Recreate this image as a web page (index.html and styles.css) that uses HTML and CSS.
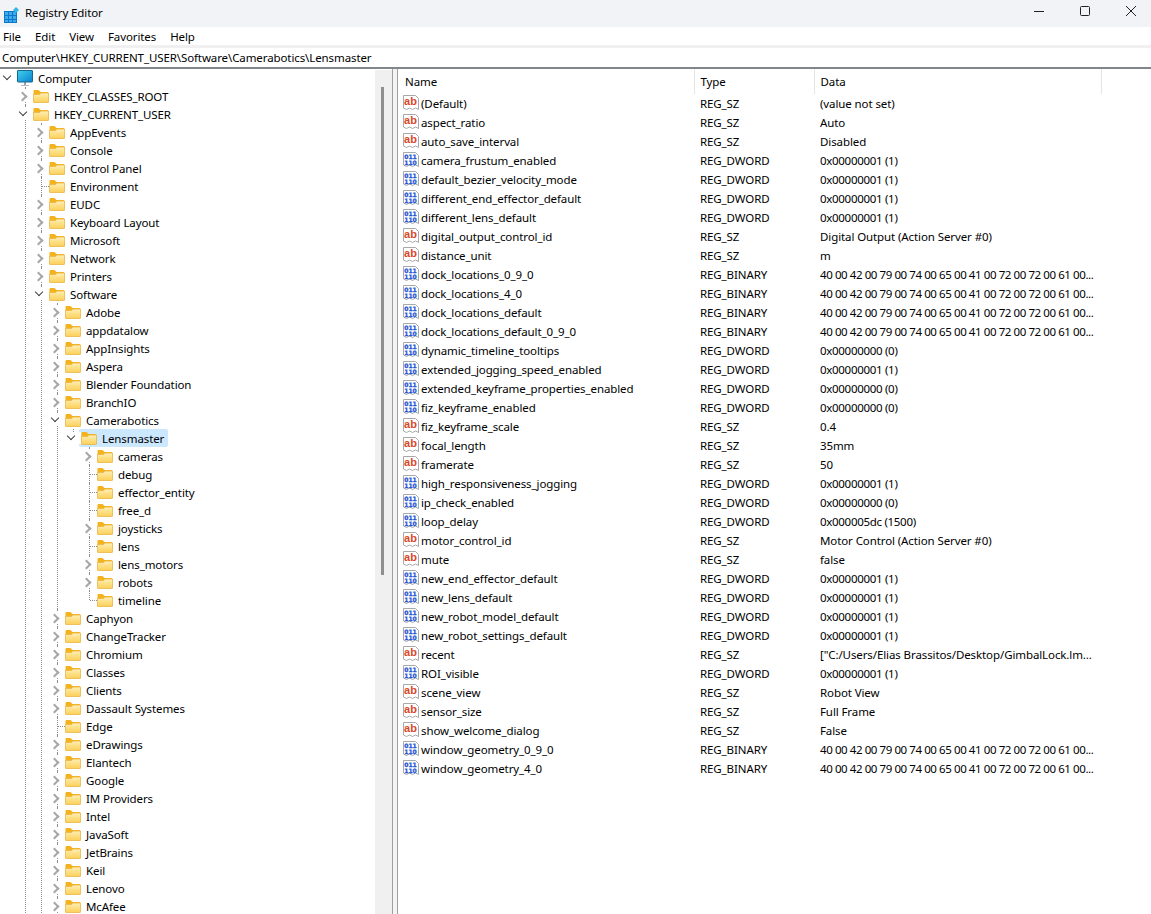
FILE: index.html
```html
<!DOCTYPE html>
<html>
<head>
    <title>Registry Editor</title>
    <link rel="stylesheet" href="styles.css">
</head>
<body>
    <svg class="sprites" width="0" height="0">
        <defs>
            <linearGradient id="folderFill" x1="0" y1="0" x2="0" y2="1">
                <stop offset="0" stop-color="#ffeeb5"/>
                <stop offset="1" stop-color="#fbd056"/>
            </linearGradient>
            <linearGradient id="screenFill" x1="0" y1="0" x2="1" y2="1">
                <stop offset="0" stop-color="#3fd3ea"/>
                <stop offset="1" stop-color="#0b7fd2"/>
            </linearGradient>
            <symbol id="folder" viewBox="0 0 16 16">
                <path d="M0.5 3a1 1 0 0 1 1-1h4l2 2h7a1 1 0 0 1 1 1v2h-15z" fill="#f4b21c"/>
                <path d="M0.5 6.5h6l1.5-1.5h7a0.5 0.5 0 0 1 0.5 0.5v8.5a0.5 0.5 0 0 1-0.5 0.5h-14a0.5 0.5 0 0 1-0.5-0.5z" fill="url(#folderFill)" stroke="#e8b648" stroke-width="0.8"/>
            </symbol>
            <symbol id="computer" viewBox="0 0 16 16">
                <rect x="7" y="12" width="2" height="3" fill="#9aa4ac"/>
                <rect x="4" y="15" width="8" height="1" fill="#b4bcc2"/>
                <rect x="0.5" y="0.5" width="15" height="11.5" rx="0.5" fill="url(#screenFill)" stroke="#17688f"/>
            </symbol>
            <symbol id="sz" viewBox="0 0 16 16">
                <path d="M0.5 0.5h12l3 3v11l-3-1.5-3 1.5-3-1.5-3 1.5-3-1.5z" fill="#fff" stroke="#a8a8a8"/>
                <text x="7.500" y="9.500" class="ab-glyph">ab</text>
            </symbol>
            <symbol id="bits" viewBox="0 0 16 16">
                <path d="M0.5 0.5h12l3 3v11l-3-1.5-3 1.5-3-1.5-3 1.5-3-1.5z" fill="#fff" stroke="#a8a8a8"/>
                <text x="7.500" y="6.500" class="bit-glyph">011</text>
                <text x="7.500" y="12.500" class="bit-glyph">110</text>
            </symbol>
        </defs>
    </svg>

    <div class="window">
        <header class="titlebar">
            <svg class="app-icon" width="20" height="20" viewBox="0 0 20 20">
                <rect x="4" y="7" width="13" height="12" fill="#3fa9ec"/>
                <path d="M4.500 7v12M8.500 7v12M12.500 7v12M16.500 7v12M4 7.500h13M4 11.500h13M4 15.500h13M4 18.500h13" stroke="#0b78c9" stroke-width="1"/>
                <path d="M16 3l3 3-3 3-3-3z" fill="#35b4ea"/>
            </svg>
            <span class="app-title">Registry Editor</span>
            <div class="win-controls">
                <svg class="win-btn" width="46" height="27" viewBox="0 0 46 27"><path d="M18 11.500h10" stroke="#222"/></svg>
                <svg class="win-btn" width="46" height="27" viewBox="0 0 46 27"><rect x="18.500" y="6.500" width="9" height="9" rx="1" fill="none" stroke="#222"/></svg>
                <svg class="win-btn" width="46" height="27" viewBox="0 0 46 27"><path d="M18 6l10 10M28 6l-10 10" stroke="#222"/></svg>
            </div>
        </header>

        <nav class="menubar">
            <span class="menu-item">File</span>
            <span class="menu-item">Edit</span>
            <span class="menu-item">View</span>
            <span class="menu-item">Favorites</span>
            <span class="menu-item">Help</span>
        </nav>

        <div class="address">Computer\HKEY_CURRENT_USER\Software\Camerabotics\Lensmaster</div>

        <main class="panes">
            <div class="tree-pane">
                <ul class="tree root ends">
                    <li>
                        <div class="node"><span class="chev open"></span><span class="item"><svg class="ico"><use href="#computer"/></svg><span class="label">Computer</span></span></div>
                        <ul class="tree">
                            <li><div class="node"><span class="chev"></span><span class="item"><svg class="ico"><use href="#folder"/></svg><span class="label">HKEY_CLASSES_ROOT</span></span></div></li>
                            <li>
                                <div class="node"><span class="chev open"></span><span class="item"><svg class="ico"><use href="#folder"/></svg><span class="label">HKEY_CURRENT_USER</span></span></div>
                                <ul class="tree">
                                    <li><div class="node"><span class="chev"></span><span class="item"><svg class="ico"><use href="#folder"/></svg><span class="label">AppEvents</span></span></div></li>
                                    <li><div class="node"><span class="chev"></span><span class="item"><svg class="ico"><use href="#folder"/></svg><span class="label">Console</span></span></div></li>
                                    <li><div class="node"><span class="chev"></span><span class="item"><svg class="ico"><use href="#folder"/></svg><span class="label">Control Panel</span></span></div></li>
                                    <li><div class="node"><span class="stub"></span><span class="item"><svg class="ico"><use href="#folder"/></svg><span class="label">Environment</span></span></div></li>
                                    <li><div class="node"><span class="chev"></span><span class="item"><svg class="ico"><use href="#folder"/></svg><span class="label">EUDC</span></span></div></li>
                                    <li><div class="node"><span class="chev"></span><span class="item"><svg class="ico"><use href="#folder"/></svg><span class="label">Keyboard Layout</span></span></div></li>
                                    <li><div class="node"><span class="chev"></span><span class="item"><svg class="ico"><use href="#folder"/></svg><span class="label">Microsoft</span></span></div></li>
                                    <li><div class="node"><span class="chev"></span><span class="item"><svg class="ico"><use href="#folder"/></svg><span class="label">Network</span></span></div></li>
                                    <li><div class="node"><span class="chev"></span><span class="item"><svg class="ico"><use href="#folder"/></svg><span class="label">Printers</span></span></div></li>
                                    <li>
                                        <div class="node"><span class="chev open"></span><span class="item"><svg class="ico"><use href="#folder"/></svg><span class="label">Software</span></span></div>
                                        <ul class="tree">
                                            <li><div class="node"><span class="chev"></span><span class="item"><svg class="ico"><use href="#folder"/></svg><span class="label">Adobe</span></span></div></li>
                                            <li><div class="node"><span class="chev"></span><span class="item"><svg class="ico"><use href="#folder"/></svg><span class="label">appdatalow</span></span></div></li>
                                            <li><div class="node"><span class="chev"></span><span class="item"><svg class="ico"><use href="#folder"/></svg><span class="label">AppInsights</span></span></div></li>
                                            <li><div class="node"><span class="chev"></span><span class="item"><svg class="ico"><use href="#folder"/></svg><span class="label">Aspera</span></span></div></li>
                                            <li><div class="node"><span class="chev"></span><span class="item"><svg class="ico"><use href="#folder"/></svg><span class="label">Blender Foundation</span></span></div></li>
                                            <li><div class="node"><span class="chev"></span><span class="item"><svg class="ico"><use href="#folder"/></svg><span class="label">BranchIO</span></span></div></li>
                                            <li>
                                                <div class="node"><span class="chev open"></span><span class="item"><svg class="ico"><use href="#folder"/></svg><span class="label">Camerabotics</span></span></div>
                                                <ul class="tree ends">
                                                    <li>
                                                        <div class="node"><span class="chev open"></span><span class="item selected"><svg class="ico"><use href="#folder"/></svg><span class="label">Lensmaster</span></span></div>
                                                        <ul class="tree ends">
                                                            <li><div class="node"><span class="chev"></span><span class="item"><svg class="ico"><use href="#folder"/></svg><span class="label">cameras</span></span></div></li>
                                                            <li><div class="node"><span class="stub"></span><span class="item"><svg class="ico"><use href="#folder"/></svg><span class="label">debug</span></span></div></li>
                                                            <li><div class="node"><span class="stub"></span><span class="item"><svg class="ico"><use href="#folder"/></svg><span class="label">effector_entity</span></span></div></li>
                                                            <li><div class="node"><span class="stub"></span><span class="item"><svg class="ico"><use href="#folder"/></svg><span class="label">free_d</span></span></div></li>
                                                            <li><div class="node"><span class="chev"></span><span class="item"><svg class="ico"><use href="#folder"/></svg><span class="label">joysticks</span></span></div></li>
                                                            <li><div class="node"><span class="stub"></span><span class="item"><svg class="ico"><use href="#folder"/></svg><span class="label">lens</span></span></div></li>
                                                            <li><div class="node"><span class="chev"></span><span class="item"><svg class="ico"><use href="#folder"/></svg><span class="label">lens_motors</span></span></div></li>
                                                            <li><div class="node"><span class="chev"></span><span class="item"><svg class="ico"><use href="#folder"/></svg><span class="label">robots</span></span></div></li>
                                                            <li><div class="node"><span class="stub"></span><span class="item"><svg class="ico"><use href="#folder"/></svg><span class="label">timeline</span></span></div></li>
                                                        </ul>
                                                    </li>
                                                </ul>
                                            </li>
                                            <li><div class="node"><span class="chev"></span><span class="item"><svg class="ico"><use href="#folder"/></svg><span class="label">Caphyon</span></span></div></li>
                                            <li><div class="node"><span class="chev"></span><span class="item"><svg class="ico"><use href="#folder"/></svg><span class="label">ChangeTracker</span></span></div></li>
                                            <li><div class="node"><span class="chev"></span><span class="item"><svg class="ico"><use href="#folder"/></svg><span class="label">Chromium</span></span></div></li>
                                            <li><div class="node"><span class="chev"></span><span class="item"><svg class="ico"><use href="#folder"/></svg><span class="label">Classes</span></span></div></li>
                                            <li><div class="node"><span class="chev"></span><span class="item"><svg class="ico"><use href="#folder"/></svg><span class="label">Clients</span></span></div></li>
                                            <li><div class="node"><span class="chev"></span><span class="item"><svg class="ico"><use href="#folder"/></svg><span class="label">Dassault Systemes</span></span></div></li>
                                            <li><div class="node"><span class="stub"></span><span class="item"><svg class="ico"><use href="#folder"/></svg><span class="label">Edge</span></span></div></li>
                                            <li><div class="node"><span class="chev"></span><span class="item"><svg class="ico"><use href="#folder"/></svg><span class="label">eDrawings</span></span></div></li>
                                            <li><div class="node"><span class="chev"></span><span class="item"><svg class="ico"><use href="#folder"/></svg><span class="label">Elantech</span></span></div></li>
                                            <li><div class="node"><span class="chev"></span><span class="item"><svg class="ico"><use href="#folder"/></svg><span class="label">Google</span></span></div></li>
                                            <li><div class="node"><span class="chev"></span><span class="item"><svg class="ico"><use href="#folder"/></svg><span class="label">IM Providers</span></span></div></li>
                                            <li><div class="node"><span class="chev"></span><span class="item"><svg class="ico"><use href="#folder"/></svg><span class="label">Intel</span></span></div></li>
                                            <li><div class="node"><span class="chev"></span><span class="item"><svg class="ico"><use href="#folder"/></svg><span class="label">JavaSoft</span></span></div></li>
                                            <li><div class="node"><span class="chev"></span><span class="item"><svg class="ico"><use href="#folder"/></svg><span class="label">JetBrains</span></span></div></li>
                                            <li><div class="node"><span class="chev"></span><span class="item"><svg class="ico"><use href="#folder"/></svg><span class="label">Keil</span></span></div></li>
                                            <li><div class="node"><span class="chev"></span><span class="item"><svg class="ico"><use href="#folder"/></svg><span class="label">Lenovo</span></span></div></li>
                                            <li><div class="node"><span class="chev"></span><span class="item"><svg class="ico"><use href="#folder"/></svg><span class="label">McAfee</span></span></div></li>
                                        </ul>
                                    </li>
                                </ul>
                            </li>
                        </ul>
                    </li>
                </ul>
            </div>

            <div class="scrollbar"><div class="thumb"></div></div>
            <div class="splitter"></div>

            <div class="list-pane">
                <table class="values">
                    <thead>
                        <tr><th class="col-name">Name</th><th class="col-type">Type</th><th class="col-data">Data</th></tr>
                    </thead>
                    <tbody>
                        <tr><td><svg class="ico"><use href="#sz"/></svg>(Default)</td><td>REG_SZ</td><td>(value not set)</td></tr>
                        <tr><td><svg class="ico"><use href="#sz"/></svg>aspect_ratio</td><td>REG_SZ</td><td>Auto</td></tr>
                        <tr><td><svg class="ico"><use href="#sz"/></svg>auto_save_interval</td><td>REG_SZ</td><td>Disabled</td></tr>
                        <tr><td><svg class="ico"><use href="#bits"/></svg>camera_frustum_enabled</td><td>REG_DWORD</td><td class="num">0x00000001 (1)</td></tr>
                        <tr><td><svg class="ico"><use href="#bits"/></svg>default_bezier_velocity_mode</td><td>REG_DWORD</td><td class="num">0x00000001 (1)</td></tr>
                        <tr><td><svg class="ico"><use href="#bits"/></svg>different_end_effector_default</td><td>REG_DWORD</td><td class="num">0x00000001 (1)</td></tr>
                        <tr><td><svg class="ico"><use href="#bits"/></svg>different_lens_default</td><td>REG_DWORD</td><td class="num">0x00000001 (1)</td></tr>
                        <tr><td><svg class="ico"><use href="#sz"/></svg>digital_output_control_id</td><td>REG_SZ</td><td>Digital Output (Action Server #0)</td></tr>
                        <tr><td><svg class="ico"><use href="#sz"/></svg>distance_unit</td><td>REG_SZ</td><td>m</td></tr>
                        <tr><td><svg class="ico"><use href="#bits"/></svg>dock_locations_0_9_0</td><td>REG_BINARY</td><td class="hex">40 00 42 00 79 00 74 00 65 00 41 00 72 00 72 00 61 00...</td></tr>
                        <tr><td><svg class="ico"><use href="#bits"/></svg>dock_locations_4_0</td><td>REG_BINARY</td><td class="hex">40 00 42 00 79 00 74 00 65 00 41 00 72 00 72 00 61 00...</td></tr>
                        <tr><td><svg class="ico"><use href="#bits"/></svg>dock_locations_default</td><td>REG_BINARY</td><td class="hex">40 00 42 00 79 00 74 00 65 00 41 00 72 00 72 00 61 00...</td></tr>
                        <tr><td><svg class="ico"><use href="#bits"/></svg>dock_locations_default_0_9_0</td><td>REG_BINARY</td><td class="hex">40 00 42 00 79 00 74 00 65 00 41 00 72 00 72 00 61 00...</td></tr>
                        <tr><td><svg class="ico"><use href="#bits"/></svg>dynamic_timeline_tooltips</td><td>REG_DWORD</td><td class="num">0x00000000 (0)</td></tr>
                        <tr><td><svg class="ico"><use href="#bits"/></svg>extended_jogging_speed_enabled</td><td>REG_DWORD</td><td class="num">0x00000001 (1)</td></tr>
                        <tr><td><svg class="ico"><use href="#bits"/></svg>extended_keyframe_properties_enabled</td><td>REG_DWORD</td><td class="num">0x00000000 (0)</td></tr>
                        <tr><td><svg class="ico"><use href="#bits"/></svg>fiz_keyframe_enabled</td><td>REG_DWORD</td><td class="num">0x00000000 (0)</td></tr>
                        <tr><td><svg class="ico"><use href="#sz"/></svg>fiz_keyframe_scale</td><td>REG_SZ</td><td>0.4</td></tr>
                        <tr><td><svg class="ico"><use href="#sz"/></svg>focal_length</td><td>REG_SZ</td><td>35mm</td></tr>
                        <tr><td><svg class="ico"><use href="#sz"/></svg>framerate</td><td>REG_SZ</td><td>50</td></tr>
                        <tr><td><svg class="ico"><use href="#bits"/></svg>high_responsiveness_jogging</td><td>REG_DWORD</td><td class="num">0x00000001 (1)</td></tr>
                        <tr><td><svg class="ico"><use href="#bits"/></svg>ip_check_enabled</td><td>REG_DWORD</td><td class="num">0x00000000 (0)</td></tr>
                        <tr><td><svg class="ico"><use href="#bits"/></svg>loop_delay</td><td>REG_DWORD</td><td class="num">0x000005dc (1500)</td></tr>
                        <tr><td><svg class="ico"><use href="#sz"/></svg>motor_control_id</td><td>REG_SZ</td><td>Motor Control (Action Server #0)</td></tr>
                        <tr><td><svg class="ico"><use href="#sz"/></svg>mute</td><td>REG_SZ</td><td>false</td></tr>
                        <tr><td><svg class="ico"><use href="#bits"/></svg>new_end_effector_default</td><td>REG_DWORD</td><td class="num">0x00000001 (1)</td></tr>
                        <tr><td><svg class="ico"><use href="#bits"/></svg>new_lens_default</td><td>REG_DWORD</td><td class="num">0x00000001 (1)</td></tr>
                        <tr><td><svg class="ico"><use href="#bits"/></svg>new_robot_model_default</td><td>REG_DWORD</td><td class="num">0x00000001 (1)</td></tr>
                        <tr><td><svg class="ico"><use href="#bits"/></svg>new_robot_settings_default</td><td>REG_DWORD</td><td class="num">0x00000001 (1)</td></tr>
                        <tr><td><svg class="ico"><use href="#sz"/></svg>recent</td><td>REG_SZ</td><td>["C:/Users/Elias Brassitos/Desktop/GimbalLock.lm...</td></tr>
                        <tr><td><svg class="ico"><use href="#bits"/></svg>ROI_visible</td><td>REG_DWORD</td><td class="num">0x00000001 (1)</td></tr>
                        <tr><td><svg class="ico"><use href="#sz"/></svg>scene_view</td><td>REG_SZ</td><td>Robot View</td></tr>
                        <tr><td><svg class="ico"><use href="#sz"/></svg>sensor_size</td><td>REG_SZ</td><td>Full Frame</td></tr>
                        <tr><td><svg class="ico"><use href="#sz"/></svg>show_welcome_dialog</td><td>REG_SZ</td><td>False</td></tr>
                        <tr><td><svg class="ico"><use href="#bits"/></svg>window_geometry_0_9_0</td><td>REG_BINARY</td><td class="hex">40 00 42 00 79 00 74 00 65 00 41 00 72 00 72 00 61 00...</td></tr>
                        <tr><td><svg class="ico"><use href="#bits"/></svg>window_geometry_4_0</td><td>REG_BINARY</td><td class="hex">40 00 42 00 79 00 74 00 65 00 41 00 72 00 72 00 61 00...</td></tr>
                    </tbody>
                </table>
            </div>
        </main>
    </div>
</body>
</html>
```

FILE: styles.css
```css
body {
    margin: 0;
    background-color: #fff;
    color: #000;
    font-family: "Noto Sans", "Open Sans", sans-serif;
    font-size: 11.5px;
    letter-spacing: -0.1px;
    overflow: hidden;
}
.sprites {
    display: block;
    height: 0;
}
.window {
    display: flex;
    flex-direction: column;
    height: 914px;
    overflow: hidden;
}
.titlebar {
    display: flex;
    align-items: center;
    flex: 0 0 27px;
    background-color: #f1f3f6;
}
.app-icon {
    margin-left: 0;
}
.app-title {
    margin-left: 5px;
    margin-bottom: 2px;
}
.win-controls {
    display: flex;
    margin-left: auto;
    margin-right: -3px;
}
.menubar {
    display: flex;
    flex: 0 0 18px;
    align-items: center;
    padding-left: 3px;
    gap: 14px;
    border-bottom: 3px solid #f0f0f0;
}
.address {
    flex: 0 0 19px;
    padding-left: 2px;
    line-height: 20px;
    height: 19px;
    border-bottom: 2px solid #80868a;
}
.panes {
    display: flex;
    flex: 1;
    min-height: 0;
}
.tree-pane {
    flex: 0 0 375px;
    overflow: hidden;
}
.tree {
    list-style: none;
    margin: 0;
    padding: 0 0 0 16px;
}
.tree.root {
    padding-left: 1px;
}
.tree li {
    position: relative;
}
.tree li::before {
    content: "";
    position: absolute;
    left: 8px;
    top: 0;
    bottom: 0;
    border-left: 1px dotted #8c8c8c;
}
.tree.root > li::before {
    display: none;
}
.tree.ends > li:last-child::before {
    bottom: auto;
    height: 9px;
}
.node {
    position: relative;
    display: flex;
    align-items: center;
    height: 18px;
}
.chev,
.stub {
    position: relative;
    flex: 0 0 16px;
    height: 12px;
}
.chev {
    background-color: #fff;
}
.chev::before {
    content: "";
    position: absolute;
    left: 2px;
    top: 3px;
    width: 5px;
    height: 5px;
    border-top: 2px solid #a6a6a6;
    border-right: 2px solid #a6a6a6;
    transform: rotate(45deg);
}
.chev.open::before {
    left: 3px;
    top: 1px;
    border-width: 1.5px;
    border-color: #404040;
    border-left: 0;
    border-bottom: 0;
    transform: rotate(135deg);
}
.stub::before {
    content: "";
    position: absolute;
    left: 9px;
    top: 6px;
    width: 7px;
    border-top: 1px dotted #8c8c8c;
}
.item {
    display: flex;
    align-items: center;
    height: 18px;
    margin-left: -2px;
    padding: 0 4px 0 2px;
    border-radius: 2px;
}
.item.selected {
    background-color: #cce8ff;
}
.ico {
    flex: 0 0 16px;
    width: 16px;
    height: 16px;
}
.label {
    margin-left: 5px;
    white-space: nowrap;
}
.scrollbar {
    flex: 0 0 17px;
    margin-top: 1px;
    padding-top: 17px;
    height: 828px;
    background-color: #f0f0f0;
}
.thumb {
    width: 3px;
    height: 488px;
    margin-left: 6px;
    background-color: #8f8f8f;
}
.splitter {
    flex: 0 0 4px;
    border-left: 1px solid #a0a0a0;
    border-right: 1px solid #a0a0a0;
    background-color: #f4f4f4;
}
.list-pane {
    flex: 1;
    overflow: hidden;
}
.values {
    table-layout: fixed;
    border-collapse: collapse;
    width: 704px;
}
.col-name {
    width: 296px;
}
.col-type {
    width: 120px;
}
.values th {
    height: 25px;
    padding: 0 0 0 6px;
    box-sizing: border-box;
    font-weight: normal;
    text-align: left;
    border-right: 1px solid #e5e5e5;
}
.values th.col-name {
    padding-left: 7px;
}
.values td {
    height: 19px;
    padding: 0 0 0 6px;
    white-space: nowrap;
    overflow: hidden;
}
.values td:first-child {
    padding-left: 5px;
}
.values td.num {
    letter-spacing: -0.3px;
}
.values td.hex {
    letter-spacing: -0.42px;
}
.values td .ico {
    display: inline-block;
    vertical-align: -1px;
    margin: -2px 2px -2px 0;
}
.ab-glyph {
    font-family: "Liberation Sans", sans-serif;
    font-size: 11px;
    font-weight: bold;
    letter-spacing: 0;
    fill: #d9482b;
    text-anchor: middle;
}
.bit-glyph {
    font-family: "DejaVu Sans", sans-serif;
    font-size: 6px;
    font-weight: bold;
    letter-spacing: 0;
    fill: #2455d6;
    stroke: #2455d6;
    stroke-width: 0.3px;
    text-anchor: middle;
}
```
